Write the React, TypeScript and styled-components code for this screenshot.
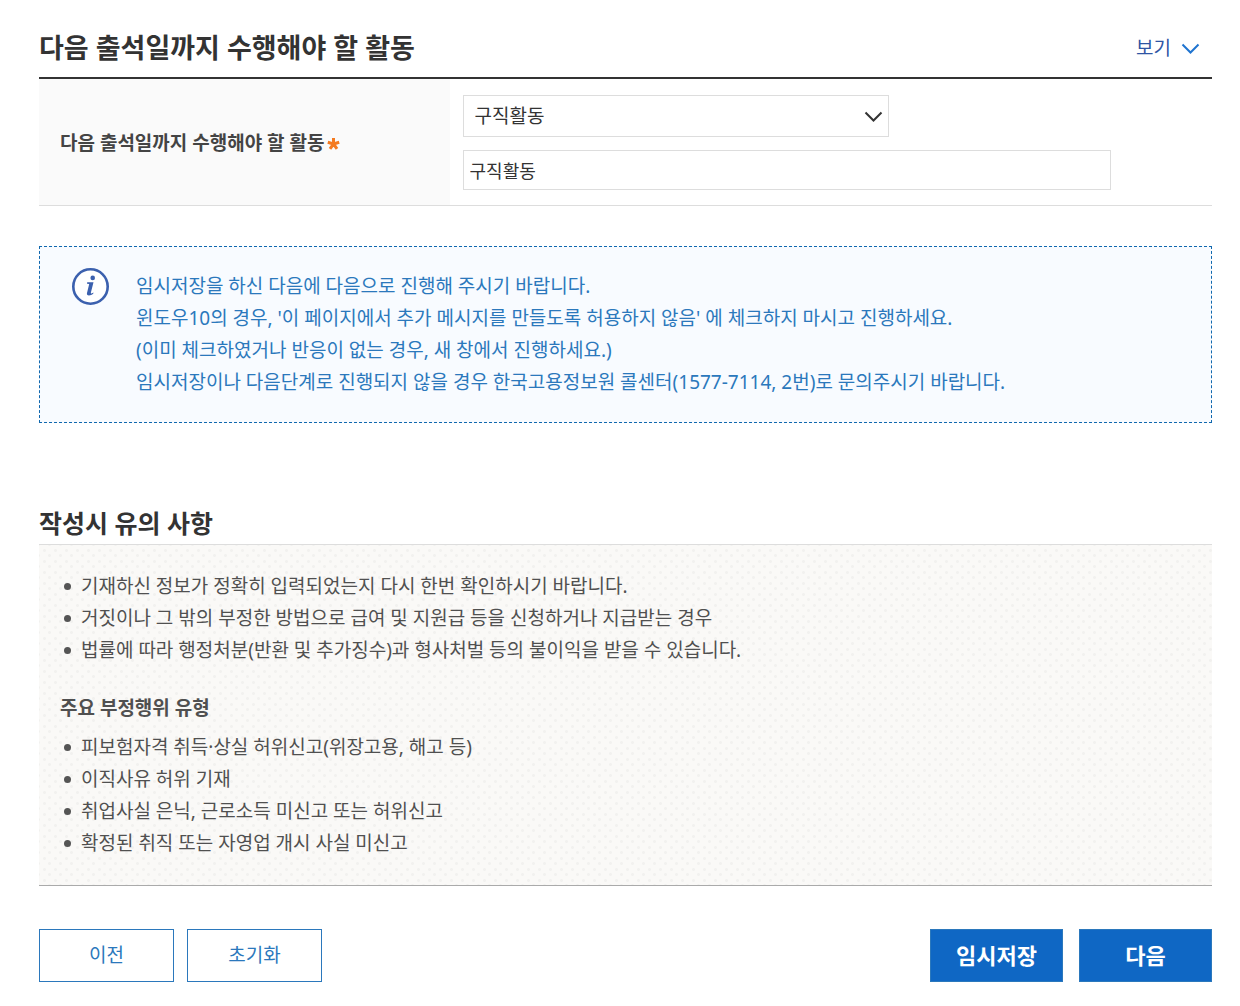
import React, { useState } from "react";
import styled, { createGlobalStyle } from "styled-components";

const fontStack = '"Noto Sans", "Noto Sans CJK KR", sans-serif';

const GlobalStyle = createGlobalStyle`
  *, *::before, *::after { box-sizing: border-box; }
  body {
    margin: 0;
    background: #fff;
    color: #505050;
    font-family: ${fontStack};
    font-size: 19px;
    line-height: 32px;
    word-break: keep-all;
  }
  button, input, select { font: inherit; }
`;

const Page = styled.main`
  padding: 20px 28px 24px 39px;
`;

const SectionHeader = styled.header`
  display: flex;
  align-items: center;
  justify-content: space-between;
  padding: 8px 12px 9px 0;
  border-bottom: 2px solid #333;
`;

const SectionTitle = styled.h2`
  margin: 0;
  color: #333;
  font-size: 27px;
  font-weight: 700;
  line-height: 40px;
`;

const ToggleButton = styled.button`
  display: flex;
  align-items: center;
  gap: 10px;
  padding: 0;
  border: 0;
  background: none;
  color: #2f55a4;
  cursor: pointer;
`;

const FormRow = styled.div`
  display: grid;
  grid-template-columns: 35% 1fr;
  border-bottom: 1px solid #ddd;
`;

const LabelCell = styled.label`
  display: flex;
  align-items: center;
  gap: 3px;
  padding: 2px 21px 0;
  background: #fafafa;
  color: #444;
  font-weight: 700;
`;

const FieldCell = styled.div`
  display: flex;
  flex-direction: column;
  gap: 13px;
  padding: 16px 13px 15px;
`;

const SelectWrap = styled.div`
  display: grid;
  align-items: center;
  width: 100%;
  max-width: 426px;

  & > * { grid-area: 1 / 1; }
  & > svg {
    justify-self: end;
    margin-right: 6px;
    pointer-events: none;
  }
`;

const Select = styled.select`
  appearance: none;
  width: 100%;
  height: 42px;
  padding: 0 36px 0 11px;
  border: 1px solid #ddd;
  border-radius: 0;
  background: #fff;
  color: #333;
`;

const TextInput = styled.input`
  width: 100%;
  max-width: 648px;
  height: 40px;
  padding: 0 6px;
  border: 1px solid #ddd;
  border-radius: 0;
  color: #333;
  font-size: 18px;
`;

const InfoBox = styled.section`
  display: flex;
  align-items: flex-start;
  gap: 27px;
  margin-top: 40px;
  padding: 20px 32px 24px;
  border: 1px dashed #1068ae;
  background: #f8fbff;
  color: #2b78bc;

  & > svg { flex: none; }
  & > p { margin: 3px 0 0; }
`;

const NoticeTitle = styled.h3`
  margin: 80px 0 0;
  padding-bottom: 1px;
  color: #333;
  font-size: 25px;
  font-weight: 700;
  line-height: 40px;
`;

const NoticeBox = styled.section`
  padding: 25px 21px 26px;
  border-top: 1px solid #ddd;
  border-bottom: 1px solid #aaa;
  background-color: #faf9f7;
  background-image: radial-gradient(circle, #f2f1ef 1px, transparent 2px),
    radial-gradient(circle, #f2f1ef 1px, transparent 2px);
  background-position: 0 0, 5px 5px;
  background-size: 11px 11px;
`;

const NoticeSubtitle = styled.h4`
  margin: 26px 0 7px;
  font-size: 19px;
  font-weight: 700;
`;

const NoticeList = styled.ul`
  margin: 0;
  padding: 0 0 0 4px;
  list-style: none;

  & > li {
    display: flex;
    gap: 10px;
  }
  & > li::before {
    content: "";
    flex: none;
    width: 7px;
    height: 7px;
    margin-top: 13px;
    border-radius: 50%;
    background: #555;
  }
`;

const ButtonBar = styled.div`
  display: flex;
  flex-wrap: wrap;
  justify-content: space-between;
  gap: 16px;
  margin-top: 43px;
`;

const ButtonGroup = styled.div<{ $gap: number }>`
  display: flex;
  gap: ${(p) => p.$gap}px;
`;

const ActionButton = styled.button<{ $primary?: boolean }>`
  min-width: ${(p) => (p.$primary ? 133 : 135)}px;
  height: 53px;
  padding: 0 16px 2px;
  border: 1px solid #2b78bc;
  background: ${(p) => (p.$primary ? "#0f67c4" : "#fff")};
  color: ${(p) => (p.$primary ? "#fff" : "#2b78bc")};
  font-size: ${(p) => (p.$primary ? 22 : 19)}px;
  font-weight: ${(p) => (p.$primary ? 700 : 400)};
  cursor: pointer;
`;

const Chevron = ({ color, up }: { color: string; up?: boolean }) => (
  <svg width="19" height="11" viewBox="0 0 19 11" fill="none" stroke={color} strokeWidth="2" aria-hidden="true">
    <path d={up ? "M1.5 9.5 9.5 1.5 17.5 9.5" : "M1.5 1.5 9.5 9.5 17.5 1.5"} />
  </svg>
);

const RequiredMark = () => (
  <svg width="13" height="13" viewBox="0 0 13 13" stroke="#f47a20" strokeWidth="3" role="img" aria-label="필수">
    <path d="M6.5 7V1M6.5 7 .8 5.2M6.5 7l5.7-1.8M6.5 7 3 11.8M6.5 7 10 11.8" />
  </svg>
);

const InfoIcon = () => (
  <svg width="37" height="39" viewBox="0 0 37 39" aria-hidden="true">
    <circle cx="18.5" cy="19.5" r="17.2" fill="#fff" stroke="#3b60ae" strokeWidth="2.6" />
    <circle cx="20.7" cy="10.9" r="2.3" fill="#3b60ae" />
    <path
      d="M15.2 15.300h6.300l-2.600 10.200c-.2.900.1 1.100.6.900l2-.9-.3 1.200c-1.400 1.100-2.800 1.700-4.200 1.700-1.700 0-2.400-.9-2-2.500l2.200-8.800-2.200-.3Z"
      fill="#3b60ae"
    />
  </svg>
);

const activities = ["구직활동", "구직활동 외"];

const guides = [
  "기재하신 정보가 정확히 입력되었는지 다시 한번 확인하시기 바랍니다.",
  "거짓이나 그 밖의 부정한 방법으로 급여 및 지원급 등을 신청하거나 지급받는 경우",
  "법률에 따라 행정처분(반환 및 추가징수)과 형사처벌 등의 불이익을 받을 수 있습니다.",
];

const violations = [
  "피보험자격 취득·상실 허위신고(위장고용, 해고 등)",
  "이직사유 허위 기재",
  "취업사실 은닉, 근로소득 미신고 또는 허위신고",
  "확정된 취직 또는 자영업 개시 사실 미신고",
];

export default function App() {
  const [open, setOpen] = useState(true);
  const [activity, setActivity] = useState("구직활동");
  const [detail, setDetail] = useState("구직활동");

  return (
    <>
      <GlobalStyle />
      <Page lang="ko">
        <SectionHeader>
          <SectionTitle>다음 출석일까지 수행해야 할 활동</SectionTitle>
          <ToggleButton type="button" aria-expanded={open} onClick={() => setOpen(!open)}>
            보기
            <Chevron color="#1f74d0" up={!open} />
          </ToggleButton>
        </SectionHeader>
        {open && (
          <FormRow>
            <LabelCell htmlFor="activity">
              다음 출석일까지 수행해야 할 활동
              <RequiredMark />
            </LabelCell>
            <FieldCell>
              <SelectWrap>
                <Select id="activity" value={activity} onChange={(e) => setActivity(e.target.value)}>
                  {activities.map((name) => (
                    <option key={name}>{name}</option>
                  ))}
                </Select>
                <Chevron color="#333" />
              </SelectWrap>
              <TextInput
                type="text"
                aria-label="활동 내용"
                value={detail}
                onChange={(e) => setDetail(e.target.value)}
              />
            </FieldCell>
          </FormRow>
        )}

        <InfoBox>
          <InfoIcon />
          <p>
            임시저장을 하신 다음에 다음으로 진행해 주시기 바랍니다.
            <br />
            윈도우10의 경우, '이 페이지에서 추가 메시지를 만들도록 허용하지 않음' 에 체크하지 마시고 진행하세요.
            <br />
            (이미 체크하였거나 반응이 없는 경우, 새 창에서 진행하세요.)
            <br />
            임시저장이나 다음단계로 진행되지 않을 경우 한국고용정보원 콜센터(1577-7114, 2번)로 문의주시기 바랍니다.
          </p>
        </InfoBox>

        <NoticeTitle>작성시 유의 사항</NoticeTitle>
        <NoticeBox>
          <NoticeList>
            {guides.map((text) => (
              <li key={text}>{text}</li>
            ))}
          </NoticeList>
          <NoticeSubtitle>주요 부정행위 유형</NoticeSubtitle>
          <NoticeList>
            {violations.map((text) => (
              <li key={text}>{text}</li>
            ))}
          </NoticeList>
        </NoticeBox>

        <ButtonBar>
          <ButtonGroup $gap={13}>
            <ActionButton type="button">이전</ActionButton>
            <ActionButton type="button">초기화</ActionButton>
          </ButtonGroup>
          <ButtonGroup $gap={16}>
            <ActionButton type="button" $primary>임시저장</ActionButton>
            <ActionButton type="button" $primary>다음</ActionButton>
          </ButtonGroup>
        </ButtonBar>
      </Page>
    </>
  );
}
